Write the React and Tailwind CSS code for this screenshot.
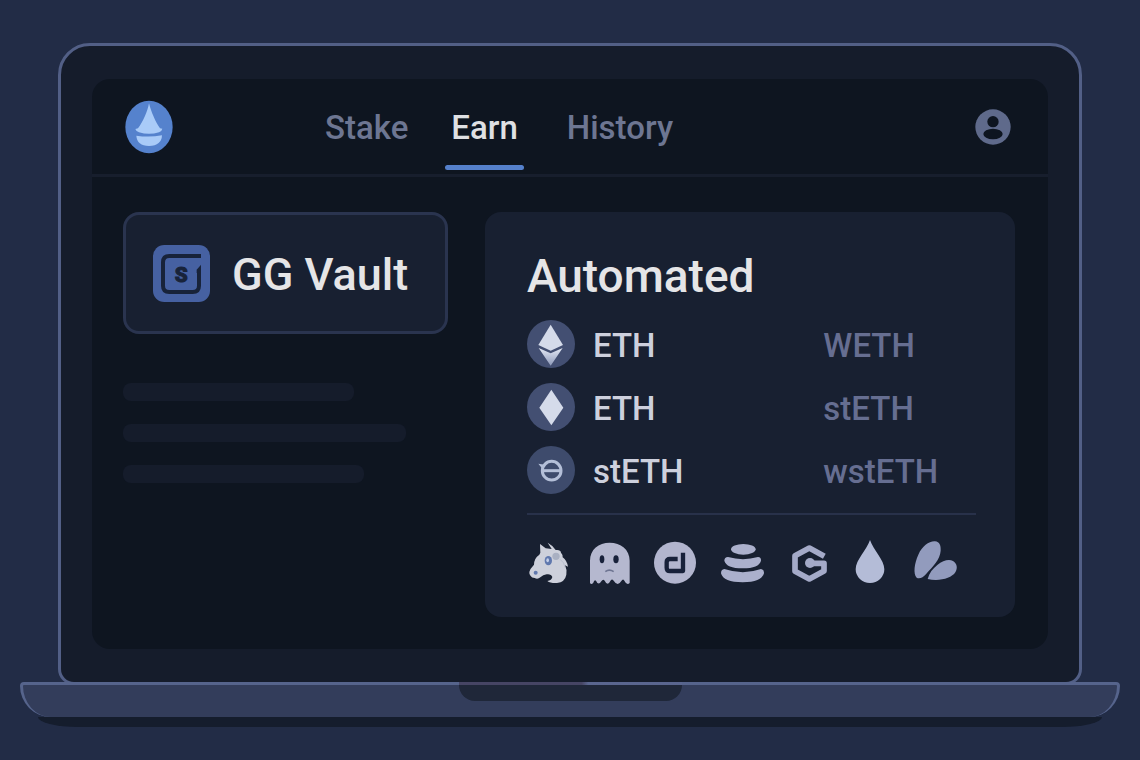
const tabs = [
  { label: 'Stake', href: '#stake' },
  { label: 'Earn', href: '#earn', active: true },
  { label: 'History', href: '#history' },
]

const pairs = [
  { id: 'eth-weth', icon: EthIcon, from: 'ETH', to: 'WETH' },
  { id: 'eth-steth', icon: DiamondIcon, from: 'ETH', to: 'stETH' },
  { id: 'steth-wsteth', icon: StethIcon, from: 'stETH', to: 'wstETH' },
]

const placeholders = ['w-[71%]', 'w-[87%]', 'w-[74%]']

function Logo() {
  return (
    <svg viewBox="0 0 144 160" className="h-[54px] w-12" role="img" aria-label="Home">
      <ellipse cx="72" cy="80" rx="71" ry="79" fill="#5582cd" />
      <path d="M72 9C78 34 92 66 105 84L112 85Q111 92 102 96Q72 105 42 96Q33 93 31 86L39 84C54 64 67 36 72 9Z" fill="#a9cbf8" />
      <path d="M34 106Q72 112 111 105Q110 136 72 137Q36 136 34 106Z" fill="#a9cbf8" />
    </svg>
  )
}

function ProfileIcon() {
  return (
    <svg viewBox="0 0 108 108" className="size-9" aria-hidden="true">
      <circle cx="54" cy="54" r="53" fill="#5f6a8b" />
      <circle cx="54" cy="38" r="17" fill="#0e1520" />
      <ellipse cx="54" cy="75" rx="29" ry="16" fill="#0e1520" />
    </svg>
  )
}

function VaultIcon() {
  return (
    <svg viewBox="0 0 171 171" className="size-[57px] shrink-0" aria-hidden="true">
      <rect width="171" height="171" rx="34" fill="#4661a2" />
      <path d="M144 33H49Q30 33 30 52V122Q30 141 49 141H119Q138 141 138 122V74" fill="none" stroke="#18233a" strokeWidth="12" />
      <path d="M144 59V84H131V74Z" fill="#18233a" />
      <text x="85" y="111" textAnchor="middle" fontSize="62" fontWeight="900" fontFamily="Roboto, sans-serif" fill="#18233a" stroke="#18233a" strokeWidth="3">S</text>
    </svg>
  )
}

function EthIcon() {
  return (
    <svg viewBox="0 0 144 144" className="size-12 shrink-0" aria-hidden="true">
      <defs>
        <linearGradient id="ethLow" x1="0" y1="0" x2="0" y2="1">
          <stop offset="0" stopColor="#e4e9f5" />
          <stop offset="1" stopColor="#8d99b9" />
        </linearGradient>
      </defs>
      <circle cx="72" cy="72" r="72" fill="#434f72" />
      <path d="M71 14L34 75L71 92L108 75Z" fill="#d5dbea" />
      <path d="M35 84L71 137L107 84L71 100Z" fill="url(#ethLow)" />
    </svg>
  )
}

function DiamondIcon() {
  return (
    <svg viewBox="0 0 144 144" className="size-12 shrink-0" aria-hidden="true">
      <circle cx="72" cy="72" r="72" fill="#434f72" />
      <path d="M73 20L37 74L73 127L109 74Z" fill="#d5dbea" />
    </svg>
  )
}

function StethIcon() {
  return (
    <svg viewBox="0 0 144 144" className="size-12 shrink-0" aria-hidden="true">
      <circle cx="72" cy="72" r="72" fill="#3e4b6c" />
      <circle cx="74" cy="74" r="28" fill="none" stroke="#b4bfd8" strokeWidth="9" />
      <path d="M46 74H102" stroke="#b4bfd8" strokeWidth="9" />
      <path d="M34 53L54 56L46 68Z" fill="#b4bfd8" />
    </svg>
  )
}

function UnicornIcon() {
  return (
    <svg viewBox="0 0 120 144" className="h-12 w-10" aria-hidden="true">
      <path
        d="M1 96Q3 86 15 74Q15 55 31 44L34 38L33 12L50 25L68 27L56 8Q71 16 80 30Q95 28 96 38Q102 44 101 52Q114 62 117 80L108 76Q115 90 112 104Q108 126 84 129Q64 130 55 123Q68 121 70 111Q66 101 53 103Q42 104 34 112Q26 119 17 114Q8 114 5 108Q0 103 1 96Z"
        fill="#cdd0db"
      />
      <circle cx="81" cy="49" r="11" fill="#a9b0c2" />
      <path d="M93 58Q106 66 109 84" fill="none" stroke="#aeb4c6" strokeWidth="2" />
      <ellipse cx="58" cy="62" rx="11" ry="14" fill="#6078ae" />
      <ellipse cx="56" cy="61" rx="4" ry="6" fill="#c5d0e9" />
      <circle cx="20" cy="98" r="6" fill="#6078ae" />
    </svg>
  )
}

function GhostIcon() {
  return (
    <svg viewBox="0 0 126 144" className="h-12 w-[42px]" aria-hidden="true">
      <path
        d="M3 62C3 28 29 8 62 8S122 28 122 62V129Q113 137 105 121Q102 115 97 123Q86 141 74 122Q68 114 64 123Q56 140 47 122Q42 115 37 124Q28 138 21 122Q16 117 13 128Q7 135 3 129Z"
        fill="#b5b8cf"
      />
      <ellipse cx="39" cy="58" rx="7" ry="12" fill="#18213a" />
      <ellipse cx="81" cy="58" rx="8" ry="12" fill="#18213a" />
      <path d="M49 95Q61 86 74 95" fill="none" stroke="#6d7491" strokeWidth="5" />
    </svg>
  )
}

function DIcon() {
  return (
    <svg viewBox="0 0 144 144" className="size-12" aria-hidden="true">
      <circle cx="72" cy="68" r="63" fill="#b2b5ce" />
      <path d="M96 38V93H57Q47 93 47 83V67Q47 57 57 57H80" fill="none" stroke="#18213a" strokeWidth="13" strokeLinejoin="round" />
    </svg>
  )
}

function StackIcon() {
  return (
    <svg viewBox="0 0 144 144" className="size-12" fill="#abb0cc" aria-hidden="true">
      <ellipse cx="73" cy="28" rx="37" ry="16" />
      <path d="M27 51Q72 64 117 51Q127 52 126 62Q120 85 71 85Q22 85 16 62Q16 52 27 51Z" />
      <path d="M16 87Q72 106 126 87Q136 88 135 100Q127 127 71 127Q13 127 6 100Q6 88 16 87Z" />
    </svg>
  )
}

function HexIcon() {
  return (
    <svg viewBox="0 0 138 144" className="h-12 w-[46px]" aria-hidden="true">
      <path d="M112 49L67 24L24 47V94L67 117L111 93V70H69" fill="none" stroke="#a4aac8" strokeWidth="17" strokeLinejoin="round" />
      <circle cx="69" cy="69" r="15" fill="#a4aac8" />
    </svg>
  )
}

function DropIcon() {
  return (
    <svg viewBox="0 0 102 144" className="h-12 w-[34px]" aria-hidden="true">
      <path d="M51 0C60 28 94 60 94 88A43 41 0 0 1 8 88C8 60 42 28 51 0Z" fill="#b4bcd7" />
    </svg>
  )
}

function LeavesIcon() {
  return (
    <svg viewBox="0 0 168 144" className="h-12 w-14" fill="#929bbd" aria-hidden="true">
      <path d="M29 113C18 101 22 70 34 44C46 18 66 3 84 4C98 5 102 17 101 32C99 60 77 79 58 101Q42 119 29 113Z" />
      <path d="M62 117C67 99 77 86 91 75C108 61 126 57 138 63C150 70 153 84 145 97C134 115 96 125 62 117Z" />
    </svg>
  )
}

function Header() {
  return (
    <header className="flex h-[98px] items-center border-b-3 border-[#171e2d] pr-[37px] pl-[33px]">
      <Logo />
      <nav className="ml-[152px] flex h-full items-center pt-0.5 text-[33px] font-medium">
        {tabs.map((tab) => (
          <a
            key={tab.label}
            href={tab.href}
            aria-current={tab.active ? 'page' : undefined}
            className={
              tab.active
                ? 'relative mr-[43px] ml-[37px] px-1.5 text-[#dfe0e3]'
                : 'text-[#6d7692]'
            }
          >
            {tab.label}
            {tab.active && (
              <span className="absolute inset-x-0 -bottom-[18px] h-[5px] rounded-full bg-[#5580cb]" />
            )}
          </a>
        ))}
      </nav>
      <button type="button" aria-label="Profile" className="ml-auto">
        <ProfileIcon />
      </button>
    </header>
  )
}

function VaultColumn() {
  return (
    <div>
      <button
        type="button"
        className="flex h-[122px] w-full items-center gap-[22px] rounded-2xl border-3 border-[#2a344f] bg-[#182031] px-[27px] text-[45px] font-medium whitespace-nowrap text-[#e5e5e7]"
      >
        <VaultIcon />
        <span className="pt-1">GG Vault</span>
      </button>
      <div className="mt-[49px] flex flex-col gap-[23px]">
        {placeholders.map((width) => (
          <div key={width} className={`h-[18px] rounded-lg bg-[#151c2b] ${width}`} />
        ))}
      </div>
    </div>
  )
}

function AutomatedCard() {
  return (
    <section className="rounded-2xl bg-[#182031] pt-9 pr-[39px] pb-[29px] pl-[42px]">
      <h2 className="text-[46px] leading-14 font-medium text-[#e5e5e7]">Automated</h2>
      <table className="mt-2 w-full text-left text-[33px] leading-10">
        <tbody>
          {pairs.map(({ id, icon: Icon, from, to }) => (
            <tr key={id} className="h-[63px]">
              <th scope="row" className="w-[66%] p-0 font-medium text-[#cdd0dd]">
                <span className="flex items-center gap-[18px]">
                  <Icon />
                  <span className="pt-1">{from}</span>
                </span>
              </th>
              <td className="p-0 pt-1 font-medium text-[#666e91]">{to}</td>
            </tr>
          ))}
        </tbody>
      </table>
      <div className="mt-3 flex gap-5 border-t-2 border-[#28314a] pt-[25px] pl-[2px]">
        <UnicornIcon />
        <GhostIcon />
        <DIcon />
        <StackIcon />
        <HexIcon />
        <DropIcon />
        <LeavesIcon />
      </div>
    </section>
  )
}

function LaptopBase() {
  return (
    <div className="mx-5 -mt-[3px]">
      <div className="flex h-[35px] justify-center rounded-t-sm rounded-b-[32px] border-3 border-b-0 border-[#56648c] bg-[#333d5b]">
        <div className="-mt-[3px] h-[19px] w-[223px] overflow-hidden rounded-b-2xl bg-[#1f2739]">
          <div className="h-[3px] bg-linear-to-r from-[#464564] from-55% to-[#5a668f] to-58%" />
        </div>
      </div>
      <div className="mx-[18px] h-2.5 rounded-b-[40px_10px] bg-[#151d2d]" />
    </div>
  )
}

export default function App() {
  return (
    <div className="min-h-screen bg-[#222c46] pt-[43px] pb-8 font-[Roboto,sans-serif]">
      <div className="mx-[58px] rounded-t-[32px] rounded-b-2xl border-3 border-[#525f86] bg-[#151c2b] px-[31px] py-[33px]">
        <div className="rounded-[18px] bg-[#0e1520]">
          <Header />
          <main className="grid grid-cols-[325fr_530fr] gap-[37px] pt-[35px] pr-[33px] pb-8 pl-[31px]">
            <VaultColumn />
            <AutomatedCard />
          </main>
        </div>
      </div>
      <LaptopBase />
    </div>
  )
}
